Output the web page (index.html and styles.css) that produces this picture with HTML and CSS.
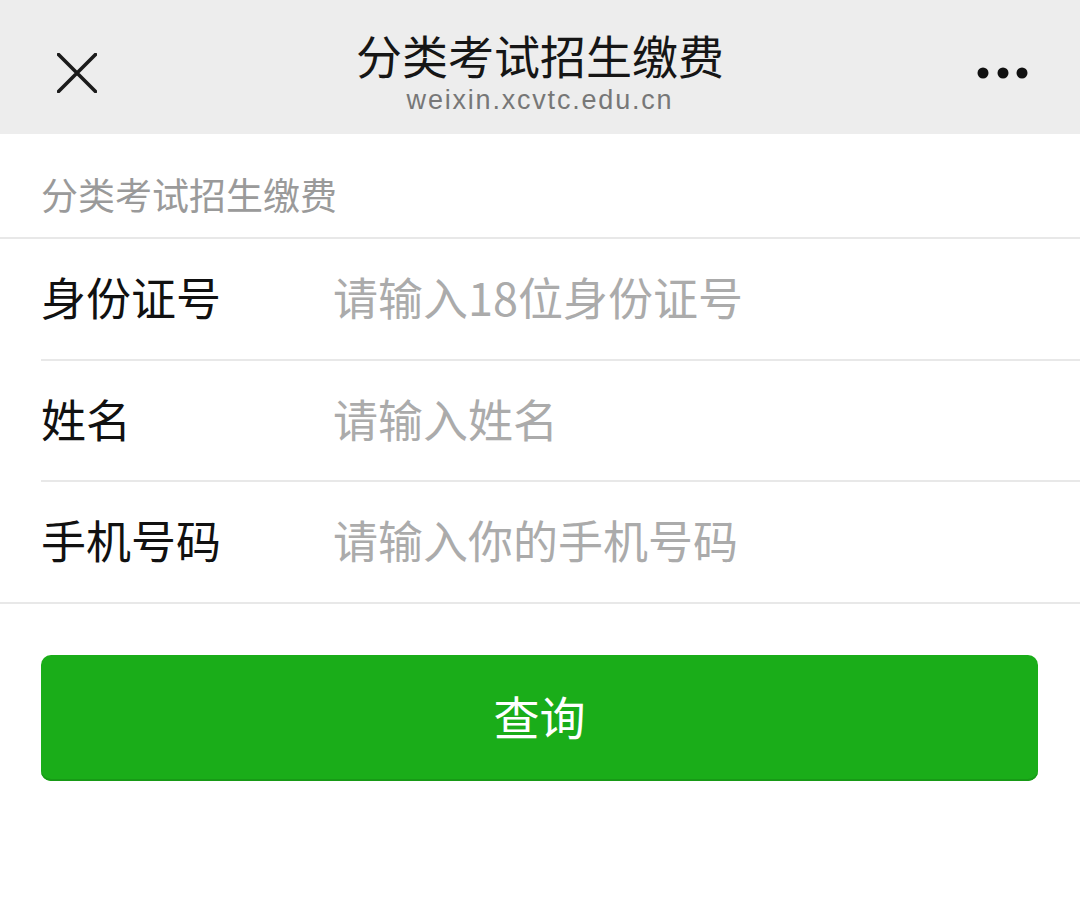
FILE: index.html
```html
<!DOCTYPE html>
<html lang="zh-CN">
<head>
<meta charset="utf-8">
<title>分类考试招生缴费</title>
<link rel="stylesheet" href="styles.css">
</head>
<body>
<header class="navbar">
  <div class="nav-left">
    <svg class="icon-close" width="40" height="40" viewBox="0 0 40 40">
      <path d="M1.5 1.5 L38.5 38.5 M38.5 1.5 L1.5 38.5" stroke="#1b1b1b" stroke-width="3.6" stroke-linecap="round" fill="none"/>
    </svg>
  </div>
  <div class="nav-title">
    <div class="nav-title-main">分类考试招生缴费</div>
    <div class="nav-title-url">weixin.xcvtc.edu.cn</div>
  </div>
  <div class="nav-right">
    <svg class="icon-more" width="51" height="12" viewBox="0 0 51 12">
      <circle cx="6" cy="6" r="5.5" fill="#111"/>
      <circle cx="26" cy="6" r="5.5" fill="#111"/>
      <circle cx="45" cy="6" r="5.5" fill="#111"/>
    </svg>
  </div>
</header>

<main class="page">
  <div class="section-title">分类考试招生缴费</div>
  <form class="form">
    <div class="cells">
      <label class="cell">
        <span class="cell-label">身份证号</span>
        <input class="cell-input" type="text" placeholder="请输入18位身份证号">
      </label>
      <label class="cell">
        <span class="cell-label">姓名</span>
        <input class="cell-input" type="text" placeholder="请输入姓名">
      </label>
      <label class="cell">
        <span class="cell-label">手机号码</span>
        <input class="cell-input" type="text" placeholder="请输入你的手机号码">
      </label>
    </div>
    <div class="btn-area">
      <button class="btn-primary" type="button">查询</button>
    </div>
  </form>
</main>
</body>
</html>
```

FILE: styles.css
```css
html, body {
  margin: 0;
  padding: 0;
  background: #ffffff;
}

body {
  font-family: "Noto Sans CJK SC", "Noto Sans", sans-serif;
  color: #111;
}

.navbar {
  height: 134px;
  background: #ededed;
  display: grid;
  grid-template-columns: 200px 1fr 200px;
  align-items: start;
  box-sizing: border-box;
}

.nav-left {
  padding-top: 53px;
  padding-left: 57px;
  display: flex;
}

.nav-right {
  padding-top: 67px;
  padding-right: 52px;
  display: flex;
  justify-content: flex-end;
}

.icon-close, .icon-more {
  display: block;
}

.nav-title {
  padding-top: 31px;
  display: flex;
  flex-direction: column;
  align-items: center;
}

.nav-title-main {
  font-size: 46px;
  line-height: 46px;
  font-weight: 400;
  color: #161616;
}

.nav-title-url {
  margin-top: 8px;
  font-family: "Liberation Sans", Arial, sans-serif;
  font-size: 27px;
  line-height: 30px;
  letter-spacing: 1.8px;
  color: #777777;
}

.section-title {
  padding: 42px 0 24px 41px;
  font-size: 37px;
  line-height: 37px;
  color: #9a9a9a;
}

.form {
  margin: 0;
}

.cells {
  border-top: 2px solid #e8e8e8;
  border-bottom: 2px solid #e8e8e8;
}

.cell {
  margin-left: 41px;
  height: 119.5px;
  box-sizing: border-box;
  padding: 0 0 3px 0;
  display: grid;
  grid-template-columns: 292px 1fr;
  align-items: center;
}

.cell + .cell {
  border-top: 2px solid #e8e8e8;
  height: 121.5px;
}

.cell-label {
  font-size: 45px;
  line-height: 50px;
  color: #111111;
}

.cell-input {
  border: none;
  outline: none;
  background: transparent;
  padding: 0;
  margin: 0;
  font-family: "Noto Sans CJK SC", "Noto Sans", sans-serif;
  font-size: 45px;
  line-height: 50px;
  color: #111;
  width: 100%;
}

.cell-input::placeholder {
  color: #ababab;
}

.btn-area {
  padding: 51px 42px 0 41px;
}

.btn-primary {
  display: flex;
  align-items: center;
  justify-content: center;
  width: 100%;
  height: 126px;
  box-sizing: border-box;
  border: none;
  border-radius: 10px;
  background: #1aad19;
  box-shadow: inset 0 -2px 0 #179a16;
  color: #ffffff;
  font-family: "Noto Sans CJK SC", "Noto Sans", sans-serif;
  font-size: 46px;
  line-height: 50px;
  padding: 0 0 5px 0;
}
```
